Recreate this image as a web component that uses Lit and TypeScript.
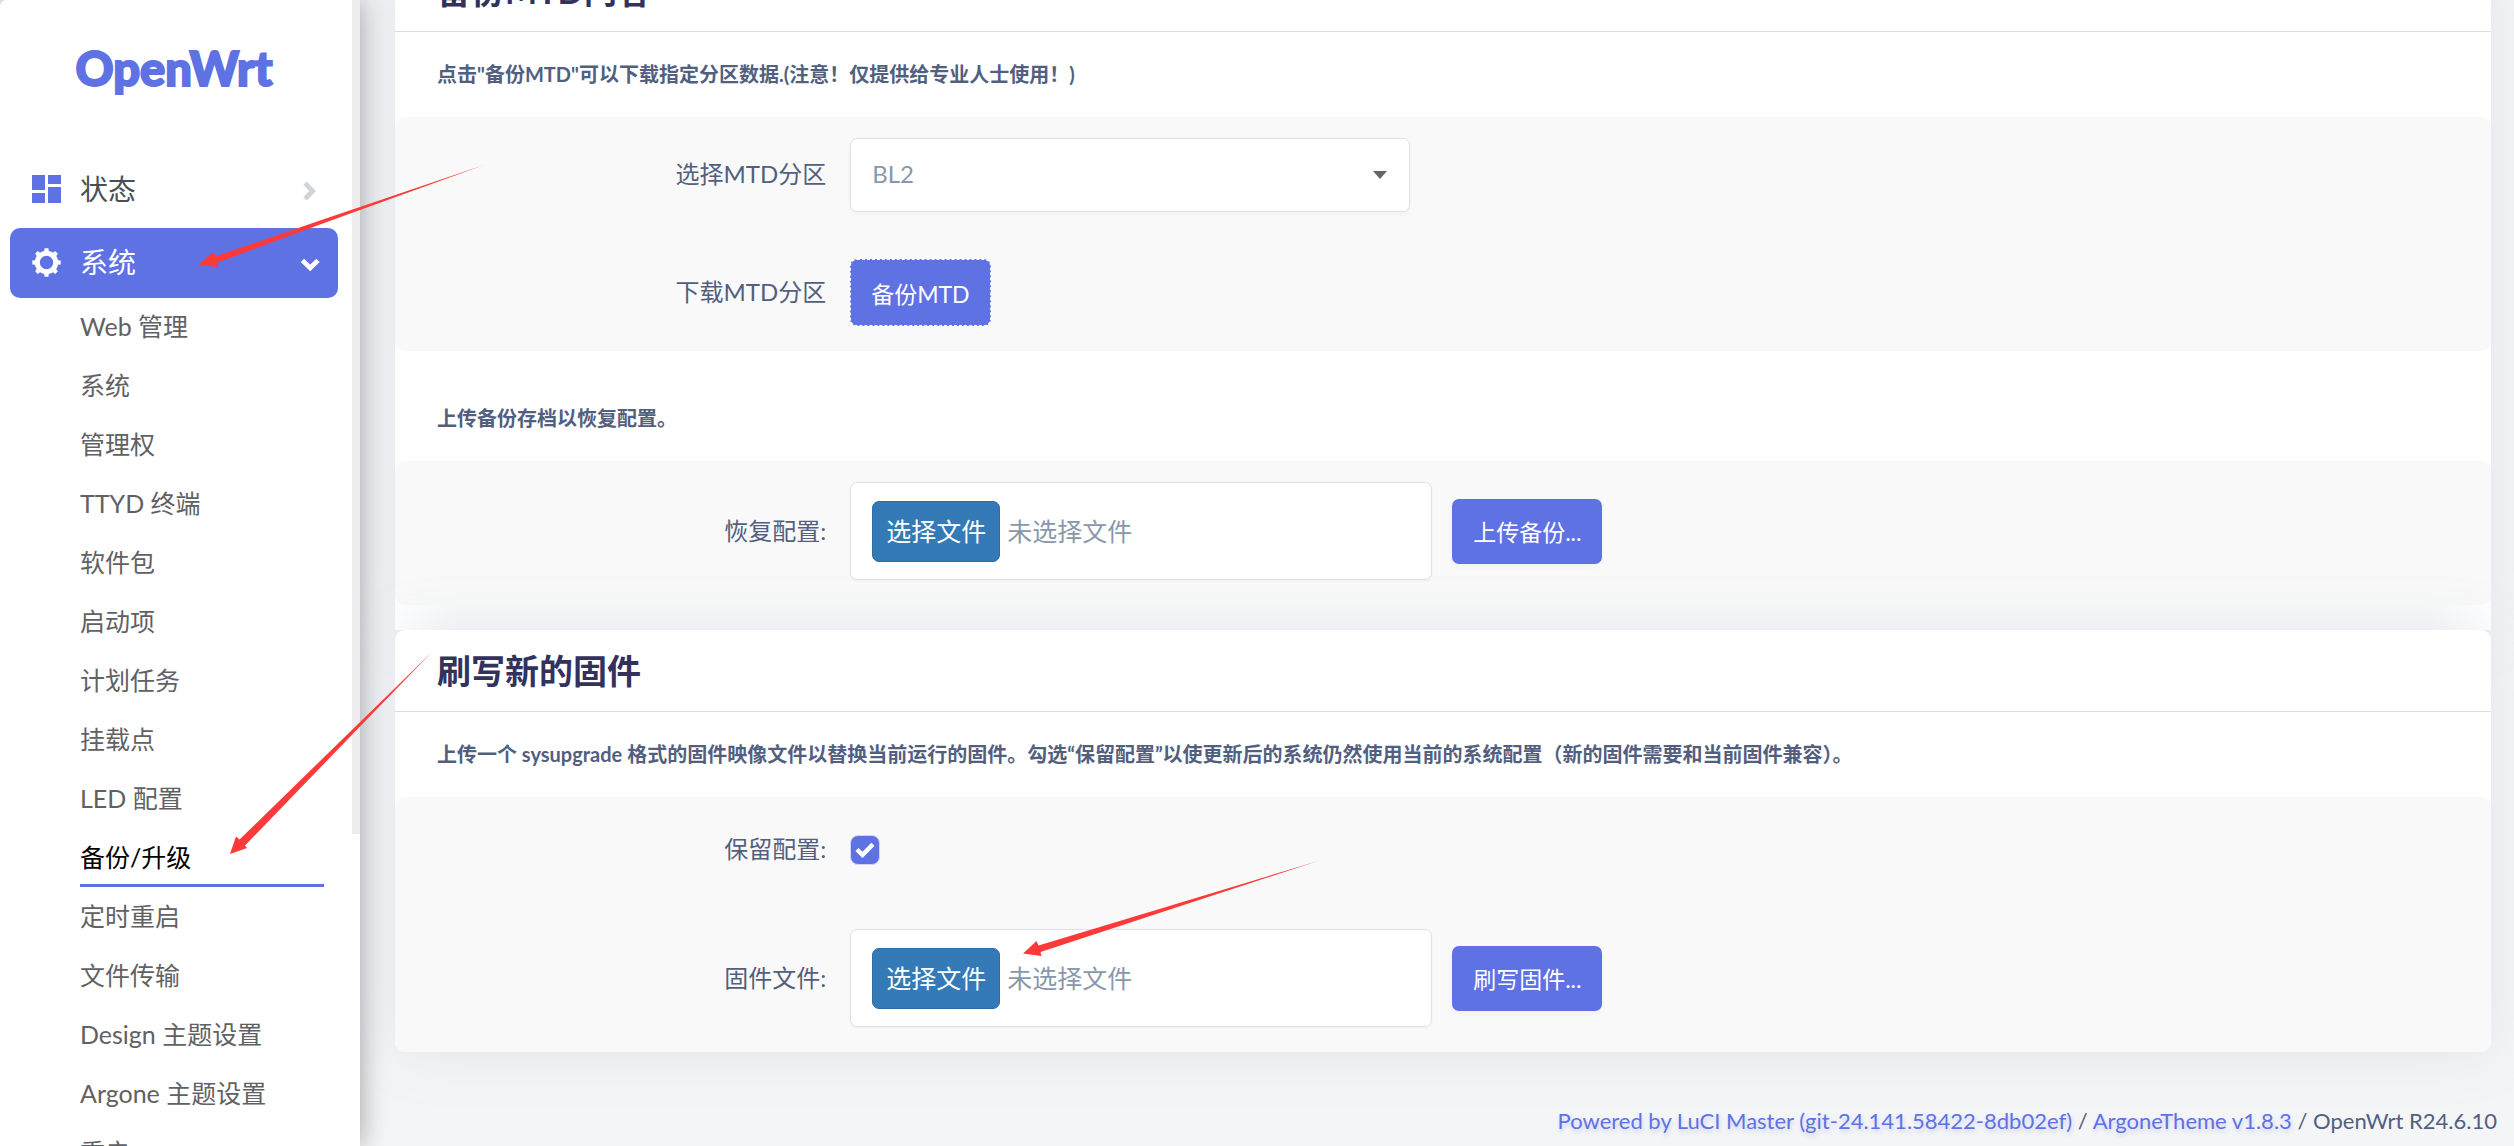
import { LitElement, html, css, svg } from "lit";
import { customElement, property, state } from "lit/decorators.js";
import { classMap } from "lit/directives/class-map.js";

const SUB_ITEMS = [
  "Web 管理",
  "系统",
  "管理权",
  "TTYD 终端",
  "软件包",
  "启动项",
  "计划任务",
  "挂载点",
  "LED 配置",
  "备份/升级",
  "定时重启",
  "文件传输",
  "Design 主题设置",
  "Argone 主题设置",
  "重启",
];

const GEAR_TEETH = [0, 45, 90, 135, 180, 225, 270, 315];

@customElement("side-menu")
export class SideMenu extends LitElement {
  @state() private current = "备份/升级";

  static styles = css`
    :host {
      display: block;
      position: relative;
      z-index: 2;
      box-sizing: border-box;
      height: 100%;
      overflow: hidden;
      background: #fff;
      border-radius: 6px 0 0 0;
      color: #525f6b;
    }
    .brand {
      display: block;
      height: 155px;
      box-sizing: border-box;
      padding: 40px 12px 0 0;
      text-align: center;
      font-size: 47px;
      line-height: 56px;
      font-weight: 900;
      font-family: "Lato Black", Lato, "Liberation Sans", sans-serif;
      color: #5e72e4;
      -webkit-text-stroke: 2px #5e72e4;
      text-decoration: none;
    }
    .menu {
      padding: 0 22px 0 10px;
    }
    ul {
      list-style: none;
      margin: 0;
      padding: 0;
    }
    .top {
      display: flex;
      align-items: center;
      height: 70px;
      padding: 0 18px 0 22px;
      border-radius: 10px;
      font-size: 28px;
      color: #4a4f55;
      text-decoration: none;
    }
    .top + .top {
      margin-top: 3px;
    }
    .top svg {
      flex: none;
    }
    .top .name {
      flex: 1;
      margin-left: 18px;
    }
    .top.open {
      background: #5e72e4;
      color: #fff;
    }
    .sub {
      padding: 0 14px 0 70px;
    }
    .sub li {
      height: 59px;
    }
    .sub a {
      display: block;
      height: 55px;
      line-height: 57px;
      border-bottom: 3px solid transparent;
      font-size: 25px;
      color: #5f6163;
      text-decoration: none;
      white-space: nowrap;
    }
    .sub a.on {
      color: #000;
      border-bottom-color: #5e72e4;
    }
    .thumb {
      position: absolute;
      top: 0;
      right: 0;
      width: 8px;
      height: 834px;
      background: #ededed;
    }
  `;

  private pick(e: Event, name: string) {
    e.preventDefault();
    this.current = name;
  }

  render() {
    return html`
      <a class="brand" href="#">OpenWrt</a>
      <nav class="menu">
        <a class="top" href="#status">
          <svg width="30" height="30" viewBox="0 0 30 30" fill="#5e72e4" aria-hidden="true">
            <rect x="0" y="0" width="13" height="15" />
            <rect x="16" y="0" width="13" height="9" />
            <rect x="0" y="18" width="13" height="10" />
            <rect x="16" y="12" width="13" height="16" />
          </svg>
          <span class="name">状态</span>
          <svg width="20" height="20" viewBox="0 0 20 20" fill="none" stroke="#ced4da" stroke-width="4.8" aria-hidden="true">
            <path d="M5 3.2 L12.6 11 L5 18.8" />
          </svg>
        </a>
        <a class="top open" href="#system">
          <svg width="30" height="30" viewBox="0 0 30 30" aria-hidden="true">
            <g fill="#fff">
              ${GEAR_TEETH.map(
                (a) => svg`<path transform=${`rotate(${a} 14.5 14.5)`} d="M11.9 5 L12.6 0.3 H16.4 L17.1 5 Z" />`
              )}
            </g>
            <circle cx="14.5" cy="14.5" r="9.2" fill="none" stroke="#fff" stroke-width="5" />
          </svg>
          <span class="name">系统</span>
          <svg width="20" height="20" viewBox="0 0 20 20" fill="none" stroke="#fff" stroke-width="4.8" aria-hidden="true">
            <path d="M2.4 7.4 L10.2 15 L18 7.4" />
          </svg>
        </a>
        <ul class="sub">
          ${SUB_ITEMS.map(
            (n) => html`<li>
              <a href="#" class=${classMap({ on: n === this.current })} @click=${(e: Event) => this.pick(e, n)}>${n}</a>
            </li>`
          )}
        </ul>
      </nav>
      <div class="thumb"></div>
    `;
  }
}

@customElement("file-row")
export class FileRow extends LitElement {
  @property() name = "";
  @property() action = "";
  @state() private chosen = "未选择文件";

  static styles = css`
    :host {
      display: flex;
      align-items: center;
      gap: 24px;
    }
    .title {
      flex: 0 0 20%;
      padding-left: 12px;
      text-align: right;
      font-size: 24px;
      color: #525f7f;
    }
    .controls {
      display: flex;
      align-items: center;
      gap: 20px;
    }
    .file {
      position: relative;
      display: flex;
      align-items: center;
      box-sizing: border-box;
      width: 582px;
      height: 98px;
      padding: 0 21px;
      gap: 7px;
      background: #fff;
      border: 1px solid #dee2e6;
      border-radius: 7px;
      box-shadow: 0 1px 3px rgba(50, 50, 93, 0.04);
      font-size: 25px;
      color: #8898aa;
    }
    .file input {
      position: absolute;
      width: 1px;
      height: 1px;
      opacity: 0;
    }
    .pick {
      box-sizing: border-box;
      height: 61px;
      line-height: 59px;
      padding: 0 13px;
      border: 1px solid #2e6da4;
      border-radius: 7px;
      background: #337ab7;
      color: #fff;
      cursor: pointer;
    }
    button {
      height: 65px;
      padding: 0 21px;
      border: 0;
      border-radius: 7px;
      background: #5e72e4;
      color: #fff;
      font-family: inherit;
      font-size: 23px;
      box-shadow: 0 2px 6px rgba(50, 50, 93, 0.04);
    }
  `;

  private onChange(e: Event) {
    const f = (e.target as HTMLInputElement).files;
    this.chosen = f && f.length ? f[0].name : "未选择文件";
  }

  render() {
    return html`
      <label class="title" for="file">${this.name}</label>
      <div class="controls">
        <div class="file">
          <input id="file" type="file" @change=${this.onChange} />
          <label class="pick" for="file">选择文件</label>
          <span>${this.chosen}</span>
        </div>
        <button type="button">${this.action}</button>
      </div>
    `;
  }
}

@customElement("app-root")
export class AppRoot extends LitElement {
  static styles = css`
    :host {
      display: grid;
      grid-template-columns: 360px minmax(0, 1fr);
      position: relative;
      height: 100vh;
      overflow: hidden;
      background: #f4f5f7;
      font-family: Lato, "Noto Sans CJK SC", "Liberation Sans", sans-serif;
      line-height: 1.4;
      color: #525f7f;
    }
    side-menu {
      box-shadow: 0 0 28px rgba(0, 0, 0, 0.36);
    }
    main {
      min-width: 0;
      height: 100vh;
      overflow: hidden;
    }
    .page {
      margin-top: -50px;
      padding: 0 23px 0 35px;
    }
    .card {
      background: #fff;
      border-radius: 10px;
      box-shadow: 0 0 56px rgba(136, 152, 170, 0.17);
    }
    .first {
      padding-bottom: 25px;
      border-radius: 10px 10px 0 0;
      background:
        linear-gradient(90deg, #fff, #f8f9fa 60px, #f8f9fa calc(100% - 60px), #fff) bottom / 100% 35px no-repeat,
        #fff;
    }
    .last {
      position: relative;
    }
    h3 {
      margin: 0;
      padding: 0 42px;
      height: 81px;
      line-height: 81px;
      border-bottom: 1px solid #dcdcde;
      font-size: 34px;
      font-weight: 700;
      color: #32325d;
    }
    .note {
      margin: 0;
      padding: 0 42px;
      line-height: 85px;
      font-size: 20px;
      font-weight: 700;
      white-space: nowrap;
    }
    .note.spaced {
      padding-top: 25px;
    }
    .panel {
      display: flex;
      flex-direction: column;
      gap: 47px;
      padding: 21px 0 25px;
      border-radius: 10px;
      background: #f9f9f9;
    }
    .row {
      display: flex;
      align-items: center;
      gap: 24px;
    }
    .title {
      flex: 0 0 20%;
      padding: 0 0 2px 12px;
      text-align: right;
      font-size: 24px;
    }
    .select {
      position: relative;
      display: flex;
      align-items: center;
      width: 560px;
    }
    select {
      appearance: none;
      box-sizing: border-box;
      width: 100%;
      height: 74px;
      padding: 0 21px 3px;
      border: 1px solid #dee2e6;
      border-radius: 7px;
      background: #fff;
      box-shadow: 0 2px 4px rgba(50, 50, 93, 0.04);
      font-family: inherit;
      font-size: 24px;
      color: #8898aa;
    }
    .select svg {
      position: absolute;
      right: 23px;
      pointer-events: none;
    }
    .dashed {
      height: 67px;
      padding: 0 20px;
      border: 1px dashed #fff;
      border-radius: 7px;
      background: #5e72e4;
      color: #fff;
      font-family: inherit;
      font-size: 23px;
    }
    .row.tick {
      height: 64px;
    }
    input[type="checkbox"] {
      appearance: none;
      display: grid;
      place-items: center;
      width: 30px;
      height: 30px;
      margin: 0;
      border: 1px solid #cfd6f5;
      border-radius: 8px;
      background: #fff;
    }
    input[type="checkbox"]:checked {
      background: #5e72e4;
    }
    .check {
      position: relative;
      display: grid;
      place-items: center;
    }
    .check svg {
      position: absolute;
      pointer-events: none;
    }
    footer {
      padding: 54px 17px 0 0;
      text-align: right;
      font-size: 22px;
      line-height: 30px;
    }
    footer a {
      color: #5e72e4;
      text-decoration: none;
      text-shadow: 1px 3px 4px rgba(94, 114, 228, 0.25);
    }
    .marks {
      position: absolute;
      top: 0;
      left: 0;
      z-index: 3;
      pointer-events: none;
    }
  `;

  render() {
    return html`
      <side-menu></side-menu>
      <main>
        <div class="page">
          <section class="card first">
            <h3>备份MTD内容</h3>
            <p class="note">点击"备份MTD"可以下载指定分区数据.(注意！仅提供给专业人士使用！)</p>
            <div class="panel">
              <div class="row">
                <label class="title" for="mtd">选择MTD分区</label>
                <div class="select">
                  <select id="mtd">
                    <option>BL2</option>
                  </select>
                  <svg width="14" height="8" viewBox="0 0 14 8" aria-hidden="true">
                    <path d="M0 0 H14 L7 8 Z" fill="#666" />
                  </svg>
                </div>
              </div>
              <div class="row">
                <label class="title" for="backup">下载MTD分区</label>
                <button class="dashed" id="backup" type="button">备份MTD</button>
              </div>
            </div>
            <p class="note spaced">上传备份存档以恢复配置。</p>
            <div class="panel">
              <file-row name="恢复配置:" action="上传备份..."></file-row>
            </div>
          </section>
          <section class="card last">
            <h3>刷写新的固件</h3>
            <p class="note">
              上传一个 sysupgrade 格式的固件映像文件以替换当前运行的固件。勾选“保留配置”以使更新后的系统仍然使用当前的系统配置（新的固件需要和当前固件兼容）。
            </p>
            <div class="panel">
              <div class="row tick">
                <label class="title" for="keep">保留配置:</label>
                <span class="check">
                  <input id="keep" type="checkbox" checked />
                  <svg width="20" height="16" viewBox="0 0 20 16" fill="none" stroke="#fff" stroke-width="4.4" aria-hidden="true">
                    <path d="M2 7.5 L7.5 12.8 L18 2.2" />
                  </svg>
                </span>
              </div>
              <file-row name="固件文件:" action="刷写固件..."></file-row>
            </div>
          </section>
        </div>
        <footer>
          <a href="#luci">Powered by LuCI Master (git-24.141.58422-8db02ef)</a> /
          <a href="#theme">ArgoneTheme v1.8.3</a> / OpenWrt R24.6.10
        </footer>
      </main>
      <svg class="marks" width="1330" height="970" viewBox="0 0 1330 970" fill="#fd3a39" aria-hidden="true">
        <path d="M199 265 L213 252 L215.3 256.4 L320 220.5 L484 165 L320 224.5 L216.5 263 L218 267 Z" />
        <path d="M230 854 L236 836.5 L239.5 839.5 L432 652 L245 845.5 L247 848 Z" />
        <path d="M1023 953.5 L1036.5 941 L1038.5 945.5 L1318 861 L1040.5 952 L1041.5 956 Z" />
      </svg>
    `;
  }
}
